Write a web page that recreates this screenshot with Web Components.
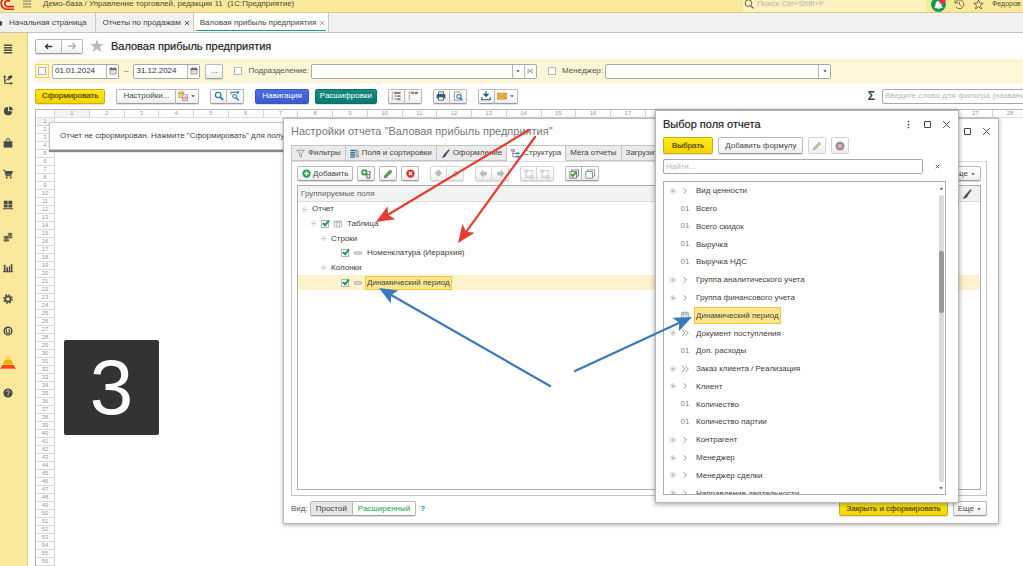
<!DOCTYPE html>
<html lang="ru">
<head>
<meta charset="utf-8">
<title>Валовая прибыль предприятия</title>
<style>
    html, body { height: 100%; }
    body {
        margin: 0;
        overflow: hidden;
        font: 8px/10px "Liberation Sans", Arial, sans-serif;
        color: #404040;
        background: #fff;
    }
</style>
</head>
<body>
<report-app></report-app>

<script>
const ICONS = {
    menu: '<path d="M1 1.500h10M1 4.500h10M1 7.500h10M1 10.500h10" stroke="#4a4a4a" stroke-width="1.600"/>',
    burger: '<path d="M1 2.500h10M1 6h10M1 9.500h10" stroke="#7d754e" stroke-width="1.200"/>',
    logo: '<path d="M9 1.500A5 5 0 1 0 6.500 10.500H12M8.500 3.800A2.600 2.600 0 1 0 6.500 8.300H12" fill="none" stroke="#d8232a" stroke-width="1.400"/>',
    home: '<path d="M0 1l6 5H4v5H0z" fill="#444"/>',
    route: '<path d="M2 2v8h8M2 8l3-3 2 1 3-3" fill="none" stroke="#4a4a4a" stroke-width="1.2"/><path d="M0 3l2-3 2 3zM9 8l3 2-3 2z" fill="#4a4a4a"/><ellipse cx="8.500" cy="2.500" rx="3" ry="1.800" fill="#4a4a4a" transform="rotate(-20 8.500 2.500)"/>',
    pie: '<path d="M6 6V1.200a5 5 0 1 0 5 5.300z" fill="#4a4a4a"/><path d="M7.300 5V.500A4.600 4.600 0 0 1 11.800 5z" fill="#4a4a4a"/>',
    bag: '<path d="M.8 4h10.400v7.500H.8z" fill="#4a4a4a"/><path d="M3.700 6V3a2.300 2.300 0 0 1 4.600 0v3" fill="none" stroke="#4a4a4a" stroke-width="1.200"/>',
    cart: '<path d="M0 1.500h2.200L3.500 8H10" fill="none" stroke="#4a4a4a" stroke-width="1.200"/><path d="M2.500 2.500H12L10.500 7H3.500z" fill="#4a4a4a"/><circle cx="4.500" cy="10.200" r="1.200" fill="#4a4a4a"/><circle cx="9.300" cy="10.200" r="1.200" fill="#4a4a4a"/>',
    boxes: '<path d="M1 1h4.600v3.700H1zM6.500 1h4.600v3.700H6.500zM1 5.500h4.600v3.400H1zM6.500 5.500h4.600v3.400H6.500zM0 9.800h12v1.400H0z" fill="#4a4a4a"/>',
    coins: '<g fill="#4a4a4a" stroke="#f9e79b" stroke-width=".5"><ellipse cx="8.500" cy="6.500" rx="3" ry="1.400"/><ellipse cx="8.500" cy="4.500" rx="3" ry="1.400"/><ellipse cx="8.500" cy="2.300" rx="3" ry="1.400"/><ellipse cx="4" cy="10.300" rx="3.600" ry="1.400"/><ellipse cx="4" cy="8.200" rx="3.600" ry="1.400"/><ellipse cx="4" cy="6" rx="3.600" ry="1.400"/></g>',
    bars: '<path d="M1 2h2v8H1zM4 5h2v5H4zM7 4h1.500v6H7zM9.300 1.500h2V10h-2zM0 10h12v1H0z" fill="#4a4a4a"/>',
    gear: '<circle cx="6" cy="6" r="3.200" fill="none" stroke="#4a4a4a" stroke-width="2"/><circle cx="6" cy="6" r="4.900" fill="none" stroke="#4a4a4a" stroke-width="1.800" stroke-dasharray="1.950 1.900"/>',
    power: '<circle cx="6" cy="6" r="4.600" fill="#f9e79b" stroke="#4a4a4a" stroke-width="1.700"/><path d="M4 2.500v4a2 2 0 1 0 2-2" fill="none" stroke="#4a4a4a" stroke-width="1.400"/>',
    cone: '<path d="M6 0l2.100 4H3.900z" fill="#fcd068"/><path d="M3.700 4.400h4.600L10 7.800H2z" fill="#ffa800"/><path d="M1.800 8.200h8.400L12 11H0z" fill="#ff4a17"/>',
    help: '<circle cx="6" cy="6" r="5.500" fill="#4a4a4a"/><path d="M4.300 4.500a1.700 1.700 0 1 1 2.500 1.600q-.8.400-.8 1.300M6 8.300v1.300" fill="none" stroke="#f9e79b" stroke-width="1.200"/>',
    left: '<path d="M11 6H2M5.500 2.500L2 6l3.500 3.500" fill="none" stroke="#333" stroke-width="1.700"/>',
    right: '<path d="M1 6h9M6.500 2.500L10 6 6.500 9.500" fill="none" stroke="#aaa" stroke-width="1.500"/>',
    star: '<path d="M6 .3l1.500 4h4.300L8.400 6.900l1.300 4.300L6 8.700l-3.700 2.500 1.300-4.300L.2 4.300h4.300z" fill="#bcbcbc"/>',
    starline: '<path d="M6 1l1.400 3.600h3.800L8.200 7l1.100 3.900L6 8.600l-3.300 2.300L3.800 7 .8 4.600h3.800z" fill="none" stroke="#5e583c" stroke-width=".9"/>',
    bell: '<circle cx="6" cy="6" r="6" fill="#169b53"/><path d="M3 8.500q1-1 1-3a2 2 0 0 1 4 0q0 2 1 3zM5 9.200h2" fill="#fff" stroke="#fff" stroke-width=".6"/><circle cx="9" cy="2.800" r="2.700" fill="#e53a35"/>',
    history: '<path d="M1.500 4A4.800 4.800 0 1 1 2 8.500M1 1.500L1.500 4.500 4.500 4M6 3v3.300l2.300 1.500" fill="none" stroke="#5e583c" stroke-width=".9"/>',
    glass: '<circle cx="5.300" cy="5" r="4" fill="none" stroke="#5e583c" stroke-width="1.100"/><path d="M8.200 8l3 3.300" stroke="#5e583c" stroke-width="1.400"/>',
    find: '<circle cx="5" cy="4.800" r="3.300" fill="#e9f5fc" stroke="#25719f" stroke-width="1.400"/><path d="M7.500 7.300L11 11" stroke="#25719f" stroke-width="1.900"/>',
    findnext: '<path d="M1 4V1.500h9M8.300 0l2.500 1.500L8.300 3.300" fill="none" stroke="#25719f" stroke-width="1.200"/><circle cx="5.500" cy="6.300" r="2.300" fill="#e9f5fc" stroke="#25719f" stroke-width="1.200"/><path d="M7.300 8l3 3" stroke="#25719f" stroke-width="1.600"/>',
    calendar: '<path d="M1.500 2.500h9v8h-9z" fill="#fff" stroke="#686868"/><path d="M1 2h10v3H1zM3 .5h1.500V3H3zM7.500.5H9V3H7.500z" fill="#686868"/><path d="M3 6.700h6M3 8.500h6" stroke="#aaa" stroke-dasharray="1 .8"/>',
    variants: '<path d="M1 1h6v7H1z" fill="#fbd78c" stroke="#cd9530" stroke-width=".9"/><path d="M1 3h6" stroke="#cd9530"/><path d="M5.500 4.500h6v7h-6z" fill="#fff" stroke="#6888aa" stroke-width=".9"/><path d="M7 10V7.500M8.500 10V6M10 10V7" stroke="#e05b4a"/>',
    drop: '<path d="M2.500 4.500h7L6 8.500z" fill="#444"/>',
    expand: '<path d="M1.500 1v10M1.500 2h2M1.500 10h2" stroke="#e68e6c" fill="none"/><path d="M4 1h7.500v2.600H4zM7 5h4.500v2.300H7zM7 8.700h4.500V11H7z" fill="#888"/><path d="M5 3v7h2M5 6h2" stroke="#888" fill="none" stroke-width=".8"/>',
    collapse: '<path d="M1.500 1v10.500M1 1.500h4" stroke="#e68e6c" fill="none" stroke-width="1.200"/><path d="M4 1h3v2.600H4zM8 1h3.800v2.600H8z" fill="#777"/>',
    print: '<path d="M3 1h6v3H3z" fill="#fff" stroke="#2d5470"/><path d="M.8 4h10.400v5H.8z" fill="#2d5470"/><path d="M3 7h6v4H3z" fill="#fff" stroke="#2d5470"/>',
    preview: '<path d="M1.500 1h6l2 2v8h-8z" fill="#fff" stroke="#777" stroke-width=".9"/><circle cx="7" cy="6.500" r="2.600" fill="#d8effa" stroke="#25719f" stroke-width="1.200"/><path d="M8.700 8.200l2.800 3" stroke="#25719f" stroke-width="1.600"/>',
    save: '<path d="M6 0v6M3.500 4l2.500 2.500L8.500 4z" fill="#20648f" stroke="#20648f" stroke-width="1.400"/><path d="M1 7.500v3h10v-3" fill="none" stroke="#20648f" stroke-width="1.400"/>',
    mail: '<path d="M.5 2.500h11v7.300H.5z" fill="#f2b653" stroke="#ca8d2d" stroke-width=".8"/><path d="M.5 2.500L6 7l5.500-4.500M.5 9.800L4.500 6M11.500 9.800L7.500 6" fill="none" stroke="#bd8228" stroke-width=".8"/>',
    dots: '<path d="M5 1h2v2H5zM5 5h2v2H5zM5 9h2v2H5z" fill="#444"/>',
    square: '<path d="M2 2h8v8H2z" fill="none" stroke="#444" stroke-width="1.300"/>',
    cross: '<path d="M1.500 1.500l9 9M10.500 1.500l-9 9" stroke="#444" stroke-width="1.200"/>',
    smallx: '<path d="M3 3l6 6M9 3L3 9" stroke="#555" stroke-width="1.500"/>',
    smallxoff: '<path d="M3 3l6 6M9 3L3 9" stroke="#999" stroke-width="1.300"/>',
    clear: '<path d="M3.500 3.500l5 5M8.500 3.500l-5 5M3 2.500v7M9 2.500v7" stroke="#777" stroke-width="1"/>',
    funnel: '<path d="M1 1.500h10L7.300 6v5L4.700 9.500V6z" fill="#dce3e7" stroke="#71818b" stroke-width=".9"/>',
    fields: '<path d="M.5 1h6v2h-6zM.5 4h6v2h-6zM.5 7h6v2h-6zM.5 10h6v1.700h-6z" fill="#2d6b96"/><path d="M8.200 11V2M10.600 1v9M7 3l1.200-2 1.200 2M9.400 9l1.200 2 1.200-2" fill="none" stroke="#4f6d80" stroke-width=".9"/>',
    brush: '<path d="M11 .8L6 6l.8.800z" fill="#8d6531" stroke="#6b4a25" stroke-width="1.600"/><path d="M4.700 5.800L7.300 8q-1.500 3.500-6.800 3.600Q3.300 9.500 4.700 5.800z" fill="#3e4c8d"/>',
    struct: '<path d="M2.500 3v7.500H6M2.500 6H6M2.500 3H5" fill="none" stroke="#555" stroke-width=".9"/><path d="M.5.5h4v2.200h-4z" fill="#fff" stroke="#555" stroke-width=".8"/><path d="M6 4.500h5.500v2.400H6zM6 9h5.500v2.400H6z" fill="#3b83b1"/>',
    plus: '<circle cx="6" cy="6" r="5.500" fill="#2a9d48"/><path d="M6 3v6M3 6h6" stroke="#fff" stroke-width="1.900"/>',
    addgroup: '<circle cx="4" cy="4" r="3.800" fill="#2a9d48"/><path d="M4 2v4M2 4h4" stroke="#fff" stroke-width="1.300"/><path d="M9 3h2v3M7 6.500h3.500V11H7z" fill="none" stroke="#555" stroke-width="1.100"/>',
    pencil: '<path d="M1 11l1-3 2 2z" fill="#444"/><path d="M2 8l6-6.500L10.500 4 4 10z" fill="#58a449" stroke="#377331" stroke-width=".7"/><path d="M8 1.500L9.500.500l2 2L10.500 4z" fill="#e88268"/>',
    remove: '<circle cx="6" cy="6" r="5.500" fill="#d3322d"/><path d="M4 4l4 4M8 4L4 8" stroke="#fff" stroke-width="1.600"/>',
    removeoff: '<circle cx="6" cy="6" r="5.500" fill="#b09092"/><path d="M4 4l4 4M8 4L4 8" stroke="#e0cfd0" stroke-width="1.300"/><circle cx="6" cy="6" r="3.700" fill="none" stroke="#94797b" stroke-width=".7"/>',
    diamond: '<path d="M6 .5L11.500 6 8.500 6.500V9.500h-5V6.500L.5 6z" fill="#b3bcc3"/>',
    down: '<path d="M6 11L1 6h2.500V2.500h5V6H11z" fill="#bcc4c9"/>',
    leftoff: '<path d="M.5 6L6 .5v3h4.500v5H6v3z" fill="#b3bcc3"/>',
    rightoff: '<path d="M11.500 6L6 .5v3H1.500v5H6v3z" fill="#b3bcc3"/>',
    ungroup: '<path d="M1 1h3v3H1zM8 8h3v3H8zM5 2h5v4M2.500 5v5H7" fill="none" stroke="#adb1b4" stroke-width=".9"/>',
    checkall: '<path d="M3 1h8.500v7.500H3z" fill="#fff" stroke="#556e80"/><path d="M1 3h8v8H1z" fill="#edf4e9" stroke="#556e80"/><path d="M2.500 6l2 2.500 4-5" fill="none" stroke="#389b2d" stroke-width="2"/>',
    uncheck: '<path d="M3 1h8.500v7.500H3z" fill="#fff" stroke="#6d8496"/><path d="M1 3h8v8H1z" fill="#fff" stroke="#6d8496"/>',
    table: '<path d="M.5 1.500h11v9H.5zM4 1.500v9M8 1.500v9M.5 3.500h11" fill="#fff" stroke="#8c9197" stroke-width=".9"/>',
    link: '<rect x=".5" y="4" width="11" height="4" rx="1.500" fill="#c2c6ca" stroke="#94989d" stroke-width=".8"/><path d="M2 6h8" stroke="#f4f4f4"/>',
    minus: '<circle cx="6" cy="6" r="5" fill="#fff" stroke="#b0b0b0"/><path d="M3 6h6" stroke="#888" stroke-width="1.600"/>',
    plusring: '<circle cx="6" cy="6" r="5" fill="#fff" stroke="#b0b0b0"/><path d="M3 6h6M6 3v6" stroke="#888" stroke-width="1.200"/>',
    angle: '<path d="M4 2l4 4-4 4" fill="none" stroke="#777" stroke-width="1.200"/>',
    angles: '<path d="M1.500 1.500L6 6l-4.500 4.500M6.500 1.500L11 6l-4.500 4.500" fill="none" stroke="#777" stroke-width="1.100"/>',
    period: '<path d="M1 2.500h10v8.700H1zM1 5.500h10M4 .5v4M8 .5v4M4 7v3M7.500 7v3" fill="none" stroke="#777" stroke-width=".9"/>',
    up: '<path d="M3 7.500h6L6 4z" fill="#444"/>'
};

// Gives an element an open shadow root with its own styles and markup
function shadow(el, css, html) {
    const root = el.attachShadow({ mode: 'open' });
    root.innerHTML = `<style>*, *::before, *::after { box-sizing: border-box; } ${css}</style>${html}`;
    return root;
}

class UiIcon extends HTMLElement {
    connectedCallback() {
        if (this.shadowRoot) return;
        const size = this.getAttribute('size') || 10;
        shadow(this, `
            :host { display: inline-flex; flex: none; width: ${size}px; height: ${size}px; }
            svg { display: block; width: 100%; height: 100%; overflow: visible; }
        `, `<svg viewBox="0 0 12 12" aria-hidden="true">${ICONS[this.getAttribute('name')] || ''}</svg>`);
    }
}

class UiButton extends HTMLElement {
    connectedCallback() {
        if (this.shadowRoot) return;
        const label = this.getAttribute('label');
        shadow(this, `
            :host { display: flex; flex: none; height: 15px; }
            button {
                display: flex; align-items: center; justify-content: center; gap: 2px;
                min-width: 18px; height: 100%; margin: 0; padding: 0 6px;
                border: 1px solid #b9b9b9; border-bottom-color: #9c9c9c; border-radius: 2px;
                background: linear-gradient(#fff 40%, #ececec);
                box-shadow: 0 1px 1px #0002;
                font: inherit; color: #444; white-space: nowrap;
            }
            :host([icon]) button { padding: 0 2px; }
            :host([primary]) button {
                border-color: #c9ae14; background: linear-gradient(#ffe91e, #f4d400);
                color: #5a4d00; text-shadow: 0 0 1px #5a4d00aa;
            }
            :host([blue]) button { border-color: #3a56b8; background: linear-gradient(#4d6ee0, #3c5bd0); color: #fff; }
            :host([teal]) button { padding: 0 4px; border-color: #0b6f66; background: linear-gradient(#17897f, #087a70); color: #fff; }
            :host([off]) button { border-color: #d4d4d4; box-shadow: none; }
            :host([wide]) button { padding: 0 5px; }
            :host([snug]) button { padding: 0 4px; }
            :host([roomy]) button { padding: 0 8px; }
            :host([pressed]) button { padding: 0 5px; background: #e6e6e6; }
            :host([chosen]) button { padding: 0 5px; background: #fff; color: #17a05a; }
            :host([seg]) button { border-radius: 0; box-shadow: none; min-width: 17px; border-left-width: 0; }
            :host([seg]:first-child) button { border-left-width: 1px; border-radius: 2px 0 0 2px; }
            :host([seg]:last-child) button { border-radius: 0 2px 2px 0; }
        `, `<button type="button" ${label ? `aria-label="${label}"` : ''}><slot></slot></button>`);
    }
}

class ButtonGroup extends HTMLElement {
    constructor() {
        super();
        shadow(this, `:host { display: flex; flex: none; border-radius: 2px; box-shadow: 0 1px 1px #0002; }`, `<slot></slot>`);
    }
}

class UiCheck extends HTMLElement {
    connectedCallback() {
        if (this.shadowRoot) return;
        const label = this.getAttribute('label');
        shadow(this, `
            :host { display: inline-flex; align-items: center; flex: none; }
            label { display: flex; align-items: center; gap: 6px; white-space: nowrap; color: #555; }
            input {
                appearance: none; position: relative; width: 8px; height: 8px; margin: 0;
                border: 1px solid #b5b5b5; background: #fff;
            }
            :host([focus]) input { outline: 1px solid #f3d04e; outline-offset: 2px; }
            :host([focus]) { padding: 0 3px; }
            input:checked::before {
                content: ""; position: absolute; left: 2px; top: -2px; width: 4px; height: 7px;
                border: solid #1b9d55; border-width: 0 2px 2px 0; transform: rotate(40deg);
            }
        `, `<label><input type="checkbox" ${label ? `aria-label="${label}"` : ''} ${this.hasAttribute('checked') ? 'checked' : ''}><slot></slot></label>`);
    }
}

// Text box with optional trailing buttons, their icons listed in "actions"
class UiField extends HTMLElement {
    connectedCallback() {
        if (this.shadowRoot) return;
        const actions = (this.getAttribute('actions') || '').split(' ').filter(Boolean);
        shadow(this, `
            :host { display: flex; height: 15px; border: 1px solid #a8a8a8; border-radius: 2px; background: #fff; overflow: hidden; }
            input { flex: 1; min-width: 0; margin: 0; padding: 0 2px; border: 0; outline: 0; background: none; font: inherit; color: #333; }
            input::placeholder { color: #b5b5b5; opacity: 1; }
            button { display: flex; align-items: center; justify-content: center; width: 12px; padding: 0; border: 0; border-left: 1px solid #b5b5b5; background: #fff; }
            :host([bare]) { border: 0; border-radius: 0; background: none; }
        `, `<input type="text" aria-label="${this.getAttribute('label') || ''}" value="${this.getAttribute('value') || ''}" placeholder="${this.getAttribute('hint') || ''}">
            ${actions.map(a => `<button type="button" aria-label="${a}"><ui-icon name="${a}" size="${a === 'drop' ? 6 : 8}"></ui-icon></button>`).join('')}`);
    }
}

class TopBar extends HTMLElement {
    constructor() {
        super();
        shadow(this, `
            :host {
                display: flex; align-items: center; height: 13px; padding: 0 0 4px; overflow: hidden;
                background: #fbe99b; border-bottom: 1px solid #d9cb8c; color: #4e4a37; white-space: nowrap;
            }
            .title { flex: 1; margin-left: 11px; white-space: pre; }
            .burger { margin-left: 8px; }
            .search { display: flex; align-items: center; gap: 1px; width: 183px; height: 20px; padding-left: 1px; background: #fdf1bd; }
            .search ui-field { flex: 1; }
            .tools { display: flex; align-items: center; gap: 8px; margin-left: 5px; }
            .user { width: 31px; font-size: 7px; }
        `, `
            <ui-icon name="logo" size="14"></ui-icon>
            <ui-icon class="burger" name="burger"></ui-icon>
            <span class="title">Демо-база / Управление торговлей, редакция 11  (1С:Предприятие)</span>
            <div class="search"><ui-icon name="glass"></ui-icon><ui-field bare label="Поиск" hint="Поиск Ctrl+Shift+F"></ui-field></div>
            <div class="tools">
                <ui-icon name="bell" size="15"></ui-icon>
                <ui-icon name="history" size="11"></ui-icon>
                <ui-icon name="starline" size="11"></ui-icon>
                <span class="user">Федоров</span>
            </div>
        `);
    }
}

class WindowTabs extends HTMLElement {
    constructor() {
        super();
        shadow(this, `
            :host { display: flex; height: 20px; background: #f1f1f1; border-bottom: 1px solid #c4c4c4; }
            button {
                display: flex; align-items: center; gap: 2px; margin: 0; padding: 0 2px 0 6px; border: 0;
                border-right: 1px solid #c9c9c9; background: none; font: inherit; color: #444; white-space: nowrap;
            }
            .home { padding: 0 9px 0 0; gap: 3px; }
            .active { background: linear-gradient(#1ba462, #1ba462) center 17px / calc(100% - 4px) 1px no-repeat #fff; }
        `, `
            <button class="home" type="button"><ui-icon name="home" size="6"></ui-icon>Начальная страница</button>
            <button type="button">Отчеты по продажам<ui-icon name="smallx" size="8"></ui-icon></button>
            <button class="active" type="button">Валовая прибыль предприятия<ui-icon name="smallxoff" size="8"></ui-icon></button>
        `);
    }
}

class SideBar extends HTMLElement {
    constructor() {
        super();
        const names = ['menu', 'route', 'pie', 'bag', 'cart', 'boxes', 'coins', 'bars', 'gear', 'power', 'cone', 'help'];
        shadow(this, `
            :host { display: block; width: 28px; flex: none; background: #fbe99b; border-right: 1px solid #d9cc94; }
            nav { display: grid; grid-auto-rows: 1fr; height: 376px; }
            a { display: flex; align-items: center; justify-content: center; width: 15px; }
        `, `<nav>${names.map(n => `<a href="#${n}" aria-label="${n}"><ui-icon name="${n}" size="${n === 'cone' ? 16 : 10}"></ui-icon></a>`).join('')}</nav>`);
    }
}

class ReportSheet extends HTMLElement {
    constructor() {
        super();
        const cols = Array.from({ length: 28 }, (_, i) => `<span>${i + 1}</span>`).join('');
        const rows = Array.from({ length: 56 }, (_, i) => `<span>${i + 1}</span>`).join('');
        shadow(this, `
            :host { display: block; position: relative; overflow: hidden; border: 1px solid #b5b5b5; border-width: 1px 0 0 1px; font-size: 6px; line-height: 7px; color: #999; }
            .cols { display: grid; grid-template-columns: 18px repeat(28, minmax(0, 1fr)); height: 8px; margin-right: -4px; border-bottom: 1px solid #ddd; text-align: center; }
            .cols span { border-left: 1px solid #d5d5d5; }
            .cols span:nth-child(2), .rows span:first-child { background: #f3f3f3; }
            .rows { width: 19px; height: 100%; border-right: 1px solid #d5d5d5; text-align: center; }
            .rows span { display: block; height: 8px; border-bottom: 1px solid #d8d8d8; }
            .note {
                position: absolute; left: 13px; top: 12px; width: 236px; padding: 8px 0 8px 10px; overflow: hidden;
                border: 1px solid #c8c8c8; background: #fff; box-shadow: 0 2px 1px #888;
                font-size: 8px; line-height: 10px; color: #444; white-space: nowrap;
            }
            .step {
                position: absolute; left: 28px; top: 230px; display: flex; align-items: center; justify-content: center;
                width: 95px; height: 95px; border-radius: 2px; background: #333; color: #fff; font-size: 78px; line-height: 95px;
            }
        `, `
            <div class="cols"><b></b>${cols}</div>
            <div class="rows">${rows}</div>
            <div class="note">Отчет не сформирован. Нажмите "Сформировать" для получения</div>
            <div class="step">3</div>
        `);
    }
}

class ReportPage extends HTMLElement {
    constructor() {
        super();
        shadow(this, `
            :host { display: flex; flex-direction: column; flex: 1; min-width: 0; padding-left: 7px; overflow: hidden; background: #fff; }
            .head { display: flex; align-items: center; gap: 7px; height: 26px; flex: none; }
            h1 { margin: 0; font-size: 11px; line-height: 14px; font-weight: normal; color: #222; text-shadow: 0 0 1px #2226; }
            .filters { display: flex; align-items: center; height: 24px; flex: none; background: #fef7d7; white-space: nowrap; color: #555; }
            .filters .date { width: 67px; margin-left: 3px; }
            .filters .dash + .date { margin-left: 0; }
            .filters ui-button { margin-left: 5px; }
            .filters .combo { width: 226px; margin-left: 2px; }
            .dash { padding: 0 5px; }
            .bar { display: flex; align-items: center; height: 26px; flex: none; }
            .bar > * { margin-right: 11px; }
            .bar .tight { margin-right: 6px; }
            .bar .sum { margin-left: auto; font-size: 12px; font-weight: bold; line-height: 14px; margin-right: 7px; }
            .bar .word { width: 160px; margin-right: -19px; }
            report-sheet { flex: 1; }
            .gap { margin-left: 11px; }
        `, `
            <div class="head">
                <button-group>
                    <ui-button seg icon roomy label="Назад"><ui-icon name="left" size="9"></ui-icon></ui-button>
                    <ui-button seg icon wide label="Вперед"><ui-icon name="right"></ui-icon></ui-button>
                </button-group>
                <ui-icon name="star" size="14"></ui-icon>
                <h1>Валовая прибыль предприятия</h1>
            </div>
            <div class="filters">
                <ui-check focus label="Период"></ui-check>
                <ui-field class="date" label="Начало периода" value="01.01.2024" actions="calendar"></ui-field>
                <span class="dash">–</span>
                <ui-field class="date" label="Конец периода" value="31.12.2024" actions="calendar"></ui-field>
                <ui-button icon label="Выбрать период">...</ui-button>
                <ui-check class="gap">Подразделение:</ui-check>
                <ui-field class="combo" label="Подразделение" actions="drop clear"></ui-field>
                <ui-check class="gap">Менеджер:</ui-check>
                <ui-field class="combo" label="Менеджер" actions="drop"></ui-field>
            </div>
            <div class="bar">
                <ui-button primary>Сформировать</ui-button>
                <button-group>
                    <ui-button seg>Настройки...</ui-button>
                    <ui-button seg icon label="Варианты"><ui-icon name="variants"></ui-icon><ui-icon name="drop" size="6"></ui-icon></ui-button>
                </button-group>
                <button-group>
                    <ui-button seg icon label="Найти"><ui-icon name="find"></ui-icon></ui-button>
                    <ui-button seg icon label="Найти далее"><ui-icon name="findnext"></ui-icon></ui-button>
                </button-group>
                <ui-button blue class="tight">Навигация</ui-button>
                <ui-button teal>Расшифровки</ui-button>
                <button-group>
                    <ui-button seg icon label="Развернуть"><ui-icon name="expand"></ui-icon></ui-button>
                    <ui-button seg icon label="Свернуть"><ui-icon name="collapse"></ui-icon></ui-button>
                </button-group>
                <button-group>
                    <ui-button seg icon label="Печать"><ui-icon name="print"></ui-icon></ui-button>
                    <ui-button seg icon label="Просмотр"><ui-icon name="preview"></ui-icon></ui-button>
                </button-group>
                <button-group>
                    <ui-button seg icon label="Сохранить"><ui-icon name="save"></ui-icon></ui-button>
                    <ui-button seg icon label="Отправить"><ui-icon name="mail"></ui-icon><ui-icon name="drop" size="6"></ui-icon></ui-button>
                </button-group>
                <span class="sum">Σ</span>
                <ui-field class="word" label="Фильтр" hint="Введите слово для фильтра (название товара)"></ui-field>
            </div>
            <report-sheet></report-sheet>
        `);
    }
}

const tree = [
    { level: 0, text: 'Отчет' },
    { level: 1, text: 'Таблица', icon: 'table', check: true },
    { level: 2, text: 'Строки' },
    { level: 3, text: 'Номенклатура (Иерархия)', icon: 'link', check: true, leaf: true },
    { level: 2, text: 'Колонки' },
    { level: 3, text: 'Динамический период', icon: 'link', check: true, leaf: true, selected: true }
];

class StructureTree extends HTMLElement {
    constructor() {
        super();
        const rows = tree.map(r => `
            <div class="row l${r.level} ${r.selected ? 'selected' : ''}">
                ${r.leaf ? '' : '<ui-icon name="minus" size="5"></ui-icon>'}
                ${r.check ? `<ui-check checked label="${r.text}"></ui-check>` : ''}
                ${r.icon ? `<ui-icon name="${r.icon}" size="8"></ui-icon>` : ''}
                <span>${r.text}</span>
            </div>`).join('');
        shadow(this, `
            :host { display: block; border: 1px solid #adadad; background: #fff; }
            .head { display: flex; align-items: center; justify-content: space-between; height: 16px; padding: 0 8px 0 3px; background: #f2f2f2; border-bottom: 1px solid #ddd; color: #666; }
            .body { display: grid; grid-auto-rows: 1fr; height: 88px; }
            .row { display: flex; align-items: center; gap: 5px; white-space: nowrap; }
            .l0 { padding-left: 4px; }
            .l1 { padding-left: 13px; }
            .l2 { padding-left: 23px; }
            .l3 { padding-left: 43px; }
            .selected { background: #fef2cd; }
            .row span { padding: 1px; border: 1px solid transparent; margin-left: -2px; }
            .selected span { border-color: #f3c933; background: #fde68f; }
        `, `<div class="head"><span>Группируемые поля</span><ui-icon name="brush"></ui-icon></div><div class="body">${rows}</div>`);
    }
}

class SettingsDialog extends HTMLElement {
    constructor() {
        super();
        shadow(this, `
            :host {
                display: flex; flex-direction: column; padding: 5px 11px 7px 7px;
                border: 1px solid #b9b9b9; background: #fff; box-shadow: 0 1px 4px #0005;
            }
            .title { display: flex; align-items: center; gap: 10px; height: 14px; margin: 0 -4px 7px 0; }
            h2 { flex: 1; margin: 0; font-size: 11px; line-height: 14px; font-weight: normal; color: #777; white-space: nowrap; }
            .tabs { display: flex; height: 16px; flex: none; overflow: hidden; }
            .tabs button {
                display: flex; align-items: center; gap: 3px; margin: 0; padding: 0 4px; border: 1px solid #c4c4c4;
                border-left-width: 0; background: #ebebeb; font: inherit; color: #444; white-space: nowrap;
            }
            .tabs button:first-child { border-left-width: 1px; }
            .tabs .active { background: #fff; border-bottom-color: #fff; }
            .panel { display: flex; flex-direction: column; flex: 1; padding: 4px 5px 5px; border: 1px solid #c4c4c4; border-top-color: #ddd; }
            .tools { display: flex; margin-bottom: 4px; gap: 4px; }
            .tools .far { margin-left: 7px; }
            .tools .more { margin-left: auto; }
            structure-tree { flex: 1; }
            .foot { display: flex; align-items: center; margin-top: 5px; color: #555; }
            .foot a { flex: 1; color: #2383c4; text-decoration: none; font-weight: bold; }
            .foot ui-button { margin-left: 5px; }
            .foot button-group { margin: 0 4px 0 2px; }
            .foot button-group ui-button { margin: 0; }
        `, `
            <div class="title">
                <h2>Настройки отчета "Валовая прибыль предприятия"</h2>
                <ui-icon name="square" size="9"></ui-icon><ui-icon name="cross" size="9"></ui-icon>
            </div>
            <div class="tabs">
                <button type="button"><ui-icon name="funnel" size="9"></ui-icon>Фильтры</button>
                <button type="button"><ui-icon name="fields" size="9"></ui-icon>Поля и сортировки</button>
                <button type="button"><ui-icon name="brush" size="9"></ui-icon>Оформление</button>
                <button type="button" class="active"><ui-icon name="struct" size="9"></ui-icon>Структура</button>
                <button type="button">Мега отчеты</button>
                <button type="button">Загрузить</button>
            </div>
            <div class="panel">
                <div class="tools">
                    <ui-button snug><ui-icon name="plus" size="9"></ui-icon>Добавить</ui-button>
                    <ui-button icon label="Группировка"><ui-icon name="addgroup"></ui-icon></ui-button>
                    <ui-button icon label="Изменить"><ui-icon name="pencil"></ui-icon></ui-button>
                    <ui-button icon label="Удалить"><ui-icon name="remove" size="9"></ui-icon></ui-button>
                    <button-group class="far">
                        <ui-button seg icon off label="Вверх"><ui-icon name="diamond" size="9"></ui-icon></ui-button>
                        <ui-button seg icon off label="Вниз"><ui-icon name="down" size="9"></ui-icon></ui-button>
                    </button-group>
                    <button-group class="far">
                        <ui-button seg icon off label="Влево"><ui-icon name="leftoff" size="9"></ui-icon></ui-button>
                        <ui-button seg icon off label="Вправо"><ui-icon name="rightoff" size="9"></ui-icon></ui-button>
                    </button-group>
                    <button-group class="far">
                        <ui-button seg icon off label="Сгруппировать"><ui-icon name="ungroup"></ui-icon></ui-button>
                        <ui-button seg icon off label="Разгруппировать"><ui-icon name="ungroup"></ui-icon></ui-button>
                    </button-group>
                    <button-group class="far">
                        <ui-button seg icon label="Установить флажки"><ui-icon name="checkall"></ui-icon></ui-button>
                        <ui-button seg icon label="Снять флажки"><ui-icon name="uncheck"></ui-icon></ui-button>
                    </button-group>
                    <ui-button snug class="more">Еще<ui-icon name="drop" size="6"></ui-icon></ui-button>
                </div>
                <structure-tree></structure-tree>
            </div>
            <div class="foot">
                Вид:
                <button-group>
                    <ui-button seg pressed>Простой</ui-button>
                    <ui-button seg chosen>Расширенный</ui-button>
                </button-group>
                <a href="#help">?</a>
                <ui-button primary>Закрыть и сформировать</ui-button>
                <ui-button snug>Еще<ui-icon name="drop" size="6"></ui-icon></ui-button>
            </div>
        `);
    }
}

// kind: "" - number, ">" - attribute group, ">>" - nested group, "d" - period
const fields = [
    ['>', 'Вид ценности'],
    ['', 'Всего'],
    ['', 'Всего скидок'],
    ['', 'Выручка'],
    ['', 'Выручка НДС'],
    ['>', 'Группа аналитического учета'],
    ['>', 'Группа финансового учета'],
    ['d', 'Динамический период'],
    ['>>', 'Документ поступления'],
    ['', 'Доп. расходы'],
    ['>>', 'Заказ клиента / Реализация'],
    ['>', 'Клиент'],
    ['', 'Количество'],
    ['', 'Количество партии'],
    ['>', 'Контрагент'],
    ['>', 'Менеджер'],
    ['>', 'Менеджер сделки'],
    ['>', 'Направление деятельности']
];

class FieldPicker extends HTMLElement {
    constructor() {
        super();
        const kindIcon = { '>': 'angle', '>>': 'angles', 'd': 'period' };
        const rows = fields.map(([kind, text]) => `
            <div class="row ${kind === 'd' ? 'selected' : ''}">
                <i>${kind.startsWith('>') ? '<ui-icon name="plusring" size="6"></ui-icon>' : ''}</i>
                <i class="kind">${kindIcon[kind] ? `<ui-icon name="${kindIcon[kind]}" size="8"></ui-icon>` : '01'}</i>
                <span>${text}</span>
            </div>`).join('');
        shadow(this, `
            :host {
                display: flex; flex-direction: column; padding: 6px 12px 7px 7px;
                border: 1px solid #b5b5b5; background: #fff; box-shadow: 0 1px 5px #0006;
            }
            .title { display: flex; align-items: center; gap: 10px; height: 14px; margin: 0 -5px 6px 0; }
            h2 { flex: 1; margin: 0; font-size: 11px; line-height: 14px; font-weight: normal; color: #222; text-shadow: 0 0 1px #2226; }
            .tools { display: flex; gap: 5px; margin-bottom: 5px; }
            .tools ui-button { height: 17px; }
            .search { display: flex; align-items: center; margin-bottom: 7px; padding-right: 5px; }
            .search ui-field { flex: 1; margin-right: 11px; }
            .list { display: flex; flex: 1; min-height: 0; overflow: hidden; border: 1px solid #adadad; }
            .rows { display: grid; grid-auto-rows: minmax(0, 1fr); flex: 1; height: 320px; }
            .row { display: flex; align-items: center; white-space: nowrap; }
            .row i { width: 13px; padding-left: 6px; font-style: normal; display: flex; color: #888; }
            .row .kind { width: 16px; padding: 0; justify-content: center; margin-right: 1px; }
            .row span { padding: 0 1px; line-height: 15px; border: 1px solid transparent; }
            .selected span { border-color: #f3c933; background: #fde68f; }
            .scroll { display: flex; flex-direction: column; align-items: center; justify-content: space-between; width: 8px; padding: 3px 1px; }
            .track { flex: 1; width: 5px; margin: 3px 0; padding-top: 56px; border-radius: 3px; background: #d9d9d9; }
            .thumb { height: 62px; border-radius: 3px; background: #999; }
            .dim { opacity: .5; }
        `, `
            <div class="title">
                <h2>Выбор поля отчета</h2>
                <ui-icon name="dots" size="9"></ui-icon><ui-icon name="square" size="9"></ui-icon><ui-icon name="cross" size="9"></ui-icon>
            </div>
            <div class="tools">
                <ui-button primary roomy>Выбрать</ui-button>
                <ui-button>Добавить формулу</ui-button>
                <ui-button icon off label="Изменить"><ui-icon class="dim" name="pencil"></ui-icon></ui-button>
                <ui-button icon off label="Удалить"><ui-icon name="removeoff"></ui-icon></ui-button>
            </div>
            <div class="search"><ui-field label="Найти" hint="Найти..."></ui-field><ui-icon name="smallx" size="7"></ui-icon></div>
            <div class="list">
                <div class="rows">${rows}</div>
                <div class="scroll"><ui-icon name="up" size="7"></ui-icon><div class="track"><div class="thumb"></div></div><ui-icon name="drop" size="6"></ui-icon></div>
            </div>
        `);
    }
}

// Callout arrows drawn over the windows: [from x, y, to x, y, colour]
const arrows = [
    [529, 130, 376, 222, '#e23d30'],
    [535, 137, 458, 243, '#e23d30'],
    [550, 386, 379, 288, '#3878be'],
    [575, 371, 692, 317, '#3878be']
];

class CalloutArrows extends HTMLElement {
    constructor() {
        super();
        const shapes = arrows.map(([x1, y1, x2, y2, color]) => {
            const angle = Math.atan2(y2 - y1, x2 - x1) * 180 / Math.PI;
            const len = Math.hypot(x2 - x1, y2 - y1);
            return `<g transform="translate(${x2} ${y2}) rotate(${angle})">
                <path d="M${-len} 0H-12" stroke="${color}" stroke-width="2.200" stroke-linecap="round"/>
                <path d="M0 0L-18 -7.500L-14 0L-18 7.500z" fill="${color}"/>
            </g>`;
        }).join('');
        shadow(this, `
            :host { display: block; pointer-events: none; }
            svg { display: block; width: 100%; height: 100%; }
        `, `<svg aria-hidden="true">${shapes}</svg>`);
    }
}

class ReportApp extends HTMLElement {
    constructor() {
        super();
        shadow(this, `
            :host { display: flex; flex-direction: column; position: relative; height: 100vh; overflow: hidden; }
            top-bar, window-tabs { flex: none; }
            main { display: flex; flex: 1; min-height: 0; }
            settings-dialog { position: absolute; left: 283px; right: 24px; top: 118px; bottom: 42px; }
            field-picker { position: absolute; width: 304px; right: 64px; top: 110px; bottom: 63px; }
            callout-arrows { position: absolute; inset: 0; }
        `, `
            <top-bar></top-bar>
            <window-tabs></window-tabs>
            <main><side-bar></side-bar><report-page></report-page></main>
            <settings-dialog></settings-dialog>
            <field-picker></field-picker>
            <callout-arrows></callout-arrows>
        `);
    }
}

customElements.define('ui-icon', UiIcon);
customElements.define('ui-button', UiButton);
customElements.define('button-group', ButtonGroup);
customElements.define('ui-check', UiCheck);
customElements.define('ui-field', UiField);
customElements.define('top-bar', TopBar);
customElements.define('window-tabs', WindowTabs);
customElements.define('side-bar', SideBar);
customElements.define('report-sheet', ReportSheet);
customElements.define('report-page', ReportPage);
customElements.define('structure-tree', StructureTree);
customElements.define('settings-dialog', SettingsDialog);
customElements.define('field-picker', FieldPicker);
customElements.define('callout-arrows', CalloutArrows);
customElements.define('report-app', ReportApp);
</script>
</body>
</html>
